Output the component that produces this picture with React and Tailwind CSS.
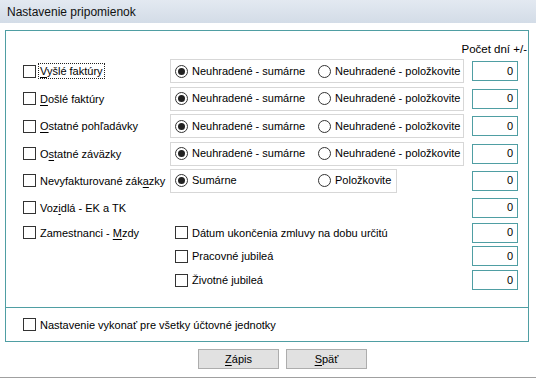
import React from "react";

const TEAL = "border-[#4f9ea3]";

function Check({ checked = false }) {
  return (
    <span className="inline-block w-[13px] h-[13px] border border-[#333333] bg-white shrink-0" />
  );
}

function Radio({ on = false }) {
  return (
    <span className="w-[13px] h-[13px] rounded-full border border-[#333333] bg-white shrink-0 flex items-center justify-center">
      {on && <span className="w-[7px] h-[7px] rounded-full bg-[#222222]" />}
    </span>
  );
}

function U({ children }) {
  return <span className="underline underline-offset-[2px] decoration-1">{children}</span>;
}

function NumBox() {
  return (
    <div className={`w-[46px] h-[20px] border ${TEAL} bg-white flex items-center justify-end pr-[4px] ml-[8px] leading-none`}>
      0
    </div>
  );
}

function LeftLabel({ children, focus = false }) {
  return (
    <div className="w-[164px] shrink-0 flex items-center pl-[17px]">
      <Check />
      {focus ? (
        <span className="ml-[2px] border border-dotted border-[#222] px-[1px] leading-[14px] whitespace-nowrap">
          {children}
        </span>
      ) : (
        <span className="ml-[4px] whitespace-nowrap leading-[14px]">{children}</span>
      )}
    </div>
  );
}

function RadioGroup({ a, b, narrow = false }) {
  return (
    <div
      className={`${narrow ? "w-[227px]" : "w-[294px]"} h-[24px] border border-[#d7d7d7] flex items-center pl-[4px]`}
    >
      <div className="w-[143px] flex items-center shrink-0">
        <Radio on />
        <span className="ml-[4px] whitespace-nowrap">{a}</span>
      </div>
      <div className="flex items-center">
        <Radio />
        <span className="ml-[4px] whitespace-nowrap">{b}</span>
      </div>
    </div>
  );
}

function Row({ h, label, focus, group, narrow }) {
  return (
    <div className={`flex items-center ${h}`}>
      <LeftLabel focus={focus}>{label}</LeftLabel>
      {group ? (
        <RadioGroup a={group[0]} b={group[1]} narrow={narrow} />
      ) : (
        <div className="w-[294px]" />
      )}
      {narrow && <div className="w-[67px]" />}
      <NumBox />
    </div>
  );
}

function SubRow({ h, left, label }) {
  return (
    <div className={`flex items-center ${h}`}>
      {left ? <LeftLabel>{left}</LeftLabel> : <div className="w-[164px] shrink-0" />}
      <div className="w-[294px] flex items-center pl-[5px]">
        <Check />
        <span className="ml-[4px] whitespace-nowrap leading-[14px]">{label}</span>
      </div>
      <NumBox />
    </div>
  );
}

export default function App() {
  const NS = ["Neuhradené - sumárne", "Neuhradené - položkovite"];
  return (
    <div
      className="w-[536px] h-[379px] bg-white text-[11px] text-black overflow-hidden flex flex-col"
      style={{ fontFamily: '"Liberation Sans", Arial, sans-serif' }}
    >
      <div className="h-[23px] shrink-0 bg-gradient-to-b from-[#e3e9f1] to-[#d3dce7] flex items-center pl-[7px] text-[12px] text-[#111]">
        Nastavenie pripomienok
      </div>

      <div className={`ml-[5px] mt-[7px] w-[524px] h-[312px] border ${TEAL} flex flex-col`}>
        <div className="h-[26px] flex items-end justify-end pr-[1px] pb-[1px]">
          <span className="leading-[13px] text-[11.5px]">Počet dní +/-</span>
        </div>

        <Row h="h-[28px]" focus label={<><U>V</U>yšlé faktúry</>} group={NS} />
        <Row h="h-[27px]" label={<><U>D</U>ošlé faktúry</>} group={NS} />
        <Row h="h-[28px]" label={<><U>O</U>statné pohľadávky</>} group={NS} />
        <Row h="h-[27px]" label={<>O<U>s</U>tatné záväzky</>} group={NS} />
        <Row h="h-[27px]" label={<>Nevyfakturované zák<U>a</U>zky</>} group={["Sumárne", "Položkovite"]} narrow />
        <Row h="h-[27px]" label={<>Voz<U>i</U>dlá - EK a TK</>} />

        <SubRow h="h-[23px]" left={<>Zamestnanci - <U>M</U>zdy</>} label="Dátum ukončenia zmluvy na dobu určitú" />
        <SubRow h="h-[24px]" label="Pracovné jubileá" />
        <SubRow h="h-[24px]" label="Životné jubileá" />

        <div className="flex-1" />
        <div className={`h-[34px] border-t ${TEAL} flex items-center pl-[17px]`}>
          <Check />
          <span className="ml-[4px] leading-[14px]">Nastavenie vykonať pre všetky účtovné jednotky</span>
        </div>
      </div>

      <div className="flex mt-[7px] ml-[198px] gap-[7px]">
        <button className="w-[81px] h-[20px] bg-[#e1e1e1] border border-[#adadad] text-[11px] leading-none flex items-center justify-center">
          <U>Z</U>ápis
        </button>
        <button className="w-[81px] h-[20px] bg-[#e1e1e1] border border-[#adadad] text-[11px] leading-none flex items-center justify-center">
          <U>S</U>päť
        </button>
      </div>

      <div className="mt-[8px] h-px bg-[#a0a0a0]" />
    </div>
  );
}
